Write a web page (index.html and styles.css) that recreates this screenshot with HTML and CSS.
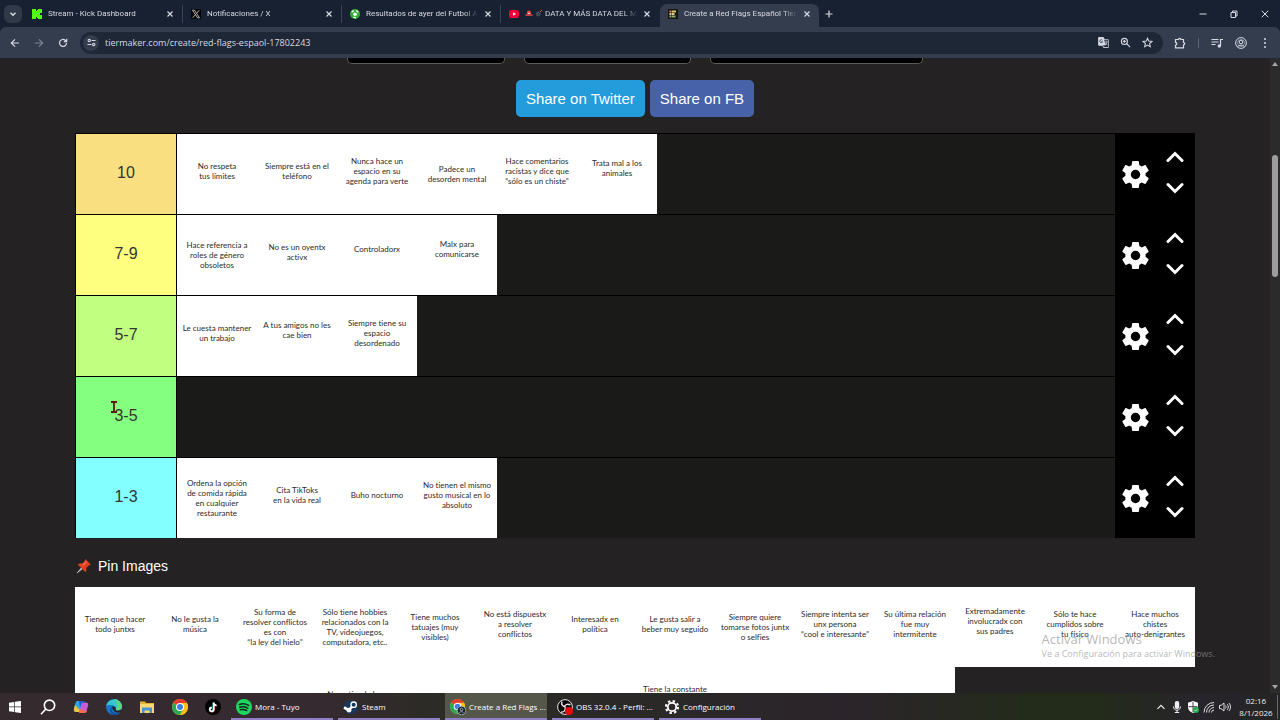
FILE: index.html
```html
<!DOCTYPE html>
<html lang="es">
<head>
    <meta charset="UTF-8">
    <meta name="viewport" content="width=device-width, initial-scale=1.0">
    <title>Create a Red Flags Español Tier List</title>
    <link rel="stylesheet" href="styles.css">
</head>
<body>

    <!-- Shared icons -->
    <svg class="sprite" aria-hidden="true">
        <symbol id="gear" viewBox="2 2 20 20"><path fill="currentColor" d="M19.43 12.98c.04-.32.07-.64.07-.98s-.03-.66-.07-.98l2.11-1.65c.19-.15.24-.42.12-.64l-2-3.46c-.12-.22-.39-.3-.61-.22l-2.49 1c-.52-.4-1.08-.73-1.69-.98l-.38-2.65A.49.49 0 0 0 14 2h-4c-.25 0-.46.18-.49.42l-.38 2.65c-.61.25-1.17.59-1.69.98l-2.49-1c-.23-.09-.49 0-.61.22l-2 3.46c-.13.22-.07.49.12.64l2.11 1.65c-.04.32-.07.65-.07.98s.03.66.07.98l-2.11 1.65c-.19.15-.24.42-.12.64l2 3.46c.12.22.39.3.61.22l2.49-1c.52.4 1.08.73 1.69.98l.38 2.65c.03.24.24.42.49.42h4c.25 0 .46-.18.49-.42l.38-2.65c.61-.25 1.17-.59 1.69-.98l2.49 1c.23.09.49 0 .61-.22l2-3.46c.12-.22.07-.49-.12-.64l-2.11-1.65zM12 15.5a3.5 3.5 0 1 1 0-7 3.5 3.5 0 0 1 0 7z"/></symbol>
        <symbol id="up" viewBox="0 0 18 12"><path d="M2 9.500l7-7 7 7" fill="none" stroke="currentColor" stroke-width="3" stroke-linecap="round"/></symbol>
        <symbol id="down" viewBox="0 0 18 12"><path d="M2 2.500l7 7 7-7" fill="none" stroke="currentColor" stroke-width="3" stroke-linecap="round"/></symbol>
        <symbol id="close" viewBox="0 0 8 8"><path d="M1.500 1.500l5 5M6.500 1.500l-5 5" stroke="currentColor" stroke-width="1.200"/></symbol>
        <symbol id="chrome" viewBox="0 0 16 16"><circle cx="8" cy="8" r="8" fill="#fbc116"/><path d="M8 8L1.070 4A8 8 0 0 1 14.930 4z" fill="#e33b2e"/><path d="M8 8L1.070 4A8 8 0 0 0 8 16l3.500-6z" fill="#2da94f"/><path d="M8 4h6.930A8 8 0 0 1 8 16l3.500-6z" fill="#fbc116"/><circle cx="8" cy="8" r="4" fill="#fff"/><circle cx="8" cy="8" r="3" fill="#3f7ee8"/></symbol>
    </svg>

    <header class="browser">
        <div class="tab-strip">
            <button class="tab-search" aria-label="Buscar pestañas"><svg viewBox="0 0 8 8"><path d="M2 3l2 2 2-2" fill="none" stroke="currentColor" stroke-width="1.200"/></svg></button>
            <div class="tab">
                <svg class="favicon" viewBox="0 0 10 10"><path fill="#53fc18" d="M0 0h4v2h1V1h1V0h4v4H8v2h2v4H6V9H5V8H4v2H0z"/></svg>
                <span class="tab-title">Stream - Kick Dashboard</span>
                <button class="tab-close" aria-label="Cerrar"><svg><use href="#close"/></svg></button>
            </div>
            <div class="tab">
                <svg class="favicon" viewBox="0 0 10 10"><rect width="10" height="10" fill="#050505"/><path d="M1.500 1.200h2l5 7.600h-2zM8.300 1.200L5.600 4.400M4.500 5.500L1.700 8.800" fill="none" stroke="#ddd" stroke-width=".8"/></svg>
                <span class="tab-title">Notificaciones / X</span>
                <button class="tab-close" aria-label="Cerrar"><svg><use href="#close"/></svg></button>
            </div>
            <div class="tab">
                <svg class="favicon" viewBox="0 0 10 10"><circle cx="5" cy="5" r="5" fill="#2fae35"/><path d="M4 3.500l2.500.5.500 2-2 1.200L3 5.800zM1 3l2-2 1 .8-1 1.700zM6.500.8l2 1.500-.3 1.400-2-1zM2.800 8.800l1-1 2 .1.200 1.500z" fill="#fff"/></svg>
                <span class="tab-title">Resultados de ayer del Futbol A</span>
                <button class="tab-close" aria-label="Cerrar"><svg><use href="#close"/></svg></button>
            </div>
            <div class="tab tab-last">
                <svg class="favicon" viewBox="0 0 10 10"><rect y="1" width="10" height="8" rx="2" fill="#f00036"/><path d="M4 3.300v3.400L7 5z" fill="#fff"/></svg>
                <span class="tab-title">
                    <svg class="title-icon" viewBox="0 0 8 8"><path d="M2 5V3.500a2 2 0 0 1 4 0V5z" fill="#f0473f"/><path d="M.5 5.300h7v1.500h-7z" fill="#f0473f"/><path d="M3 4h2v1H3z" fill="#d9dde4"/></svg>
                    <svg class="title-icon" viewBox="0 0 8 8"><circle cx="3.200" cy="5" r="2.500" fill="#3f4752"/><path d="M5 3l2-2" stroke="#d5603c"/></svg>
                    DATA Y MÁS DATA DEL M</span>
                <button class="tab-close" aria-label="Cerrar"><svg><use href="#close"/></svg></button>
            </div>
            <div class="tab tab-active">
                <svg class="favicon" viewBox="0 0 10 10"><rect width="10" height="10" fill="#17150f"/><path d="M1.500 1.500h2v2h-2z" fill="#e58b6b"/><path d="M4 1.500h4v2H4z" fill="#d9c46a"/><path d="M1.500 4h2v2h-2zM4 4h2.500v2H4z" fill="#e2cf8d"/><path d="M1.500 6.500h2v2h-2zM4 6.500h3.500v2H4z" fill="#8fae6d"/></svg>
                <span class="tab-title">Create a Red Flags Español Tier</span>
                <button class="tab-close" aria-label="Cerrar"><svg><use href="#close"/></svg></button>
            </div>
            <button class="tab-new" aria-label="Nueva pestaña"><svg viewBox="0 0 8 8"><path d="M4 .5v7M.5 4h7" stroke="currentColor" stroke-width="1.200"/></svg></button>
            <div class="window-buttons">
                <button aria-label="Minimizar"><svg viewBox="0 0 8 8"><path d="M.5 4h7" stroke="currentColor"/></svg></button>
                <button aria-label="Restaurar"><svg viewBox="0 0 8 8"><path d="M1 2.500h4.500v5H1zM2.500 2.500V1H7v5H5.500" fill="none" stroke="currentColor"/></svg></button>
                <button aria-label="Cerrar ventana"><svg viewBox="0 0 8 8"><path d="M.8.8l6.400 6.400M7.200.8L.8 7.200" stroke="currentColor"/></svg></button>
            </div>
        </div>

        <div class="toolbar">
            <button class="tool" aria-label="Atrás"><svg viewBox="0 0 12 12"><path d="M10 6H2.500M6 2.300L2.300 6 6 9.700" fill="none" stroke="currentColor" stroke-width="1.200"/></svg></button>
            <button class="tool tool-off" aria-label="Adelante"><svg viewBox="0 0 12 12"><path d="M2 6h7.500M6 2.300L9.700 6 6 9.700" fill="none" stroke="currentColor" stroke-width="1.200"/></svg></button>
            <button class="tool" aria-label="Recargar"><svg viewBox="0 0 12 12"><path d="M9.500 6A3.500 3.500 0 1 1 8.300 3.300L9.500 4.500M9.700 1.800v2.900H6.800" fill="none" stroke="currentColor" stroke-width="1.200"/></svg></button>
            <div class="address">
                <button class="site-info" aria-label="Información del sitio"><svg viewBox="0 0 10 10"><g fill="none" stroke="currentColor" stroke-width="1.200"><circle cx="2.500" cy="2.800" r="1.300"/><path d="M5 2.800h4.500M.5 7.200H5"/><circle cx="7.500" cy="7.200" r="1.300"/></g></svg></button>
                <input type="text" class="url" aria-label="Dirección" value="tiermaker.com/create/red-flags-espaol-17802243">
                <button aria-label="Traducir"><svg viewBox="0 0 12 12"><path d="M1 .5h5l1 2.500h4a.7.7 0 0 1 .7.700v7a.7.7 0 0 1-.7.700H6L5.200 9H1a.7.7 0 0 1-.7-.7v-7A.7.700 0 0 1 1 .5z" fill="none" stroke="currentColor"/><path d="M.5.500H6L8.500 9h-8z" fill="currentColor"/><path d="M4.800 3.600a1.600 1.600 0 1 0 .2 1.600H3.600" fill="none" stroke="#1d2736" stroke-width=".8"/><path d="M7.500 5.500h3.300M9 4.700v.8M10 5.700L8 9M8.200 6.500l2 2.300" stroke="currentColor" stroke-width=".8"/></svg></button>
                <button aria-label="Zoom"><svg viewBox="0 0 12 12"><g fill="none" stroke="currentColor" stroke-width="1.200"><circle cx="4.800" cy="4.800" r="3.300"/><path d="M7.200 7.200L11 11M3.200 4.800h3.200M4.800 3.200v3.200"/></g></svg></button>
                <button aria-label="Favoritos"><svg viewBox="0 0 12 12"><path d="M6 1.300l1.400 3.200 3.500.3-2.600 2.300.8 3.400L6 8.700l-3.100 1.800.8-3.400L1.100 4.800l3.500-.3z" fill="none" stroke="currentColor" stroke-width="1.100"/></svg></button>
            </div>
            <button class="tool" aria-label="Extensiones"><svg viewBox="0 0 12 12"><path d="M1.500 2.500h3a1.200 1.200 0 0 1 2.400 0h2.600v3a1.100 1.100 0 0 1 0 2.300v3h-8V8a1.300 1.300 0 0 0 0-2.600z" fill="none" stroke="currentColor" stroke-width="1.200"/></svg></button>
            <span class="divider"></span>
            <button class="tool" aria-label="Multimedia"><svg viewBox="0 0 12 12"><path d="M.5 2.500h7M.5 5h7M.5 7.500h4M9.500 9V2.500H12" fill="none" stroke="currentColor" stroke-width="1.200"/><circle cx="8.300" cy="9" r="1.700" fill="currentColor"/></svg></button>
            <button class="tool" aria-label="Perfil"><svg viewBox="0 0 12 12"><g fill="none" stroke="currentColor"><circle cx="6" cy="6" r="5.400"/><circle cx="6" cy="5" r="1.800"/><path d="M2.500 9.800c1.700-2.200 5.300-2.200 7 0"/><circle cx="6" cy="6" r="3.500" opacity=".5"/></g></svg></button>
            <button class="tool" aria-label="Menú"><svg viewBox="0 0 12 12"><g fill="currentColor"><circle cx="6" cy="2" r="1"/><circle cx="6" cy="6" r="1"/><circle cx="6" cy="10" r="1"/></g></svg></button>
        </div>
    </header>

    <div class="viewport">
        <main class="page">
            <div class="top-cards">
                <div class="card card-small"></div>
                <div class="card card-medium"></div>
                <div class="card card-large"></div>
            </div>

            <div class="share">
                <a href="#" class="share-link twitter">Share on Twitter</a>
                <a href="#" class="share-link facebook">Share on FB</a>
            </div>

            <section class="board">
                <div class="tier">
                    <div class="tier-label tier-gold">10</div>
                    <div class="tier-items">
                        <div class="tile">No respeta<br>tus límites</div>
                        <div class="tile">Siempre está en el<br>teléfono</div>
                        <div class="tile">Nunca hace un<br>espacio en su<br>agenda para verte</div>
                        <div class="tile tile-low">Padece un<br>desorden mental</div>
                        <div class="tile">Hace comentarios<br>racistas y dice que<br>“sólo es un chiste”</div>
                        <div class="tile tile-high">Trata mal a los<br>animales</div>
                    </div>
                    <div class="tier-controls">
                        <button class="settings" aria-label="Opciones"><svg><use href="#gear"/></svg></button>
                        <div class="movers">
                            <button aria-label="Subir"><svg><use href="#up"/></svg></button>
                            <button aria-label="Bajar"><svg><use href="#down"/></svg></button>
                        </div>
                    </div>
                </div>
                <div class="tier">
                    <div class="tier-label tier-yellow">7-9</div>
                    <div class="tier-items">
                        <div class="tile tile-low">Hace referencia a<br>roles de género<br>obsoletos</div>
                        <div class="tile">No es un oyentx<br>activx</div>
                        <div class="tile tile-high">Controladorx</div>
                        <div class="tile tile-high">Malx para<br>comunicarse</div>
                    </div>
                    <div class="tier-controls">
                        <button class="settings" aria-label="Opciones"><svg><use href="#gear"/></svg></button>
                        <div class="movers">
                            <button aria-label="Subir"><svg><use href="#up"/></svg></button>
                            <button aria-label="Bajar"><svg><use href="#down"/></svg></button>
                        </div>
                    </div>
                </div>
                <div class="tier">
                    <div class="tier-label tier-lime">5-7</div>
                    <div class="tier-items">
                        <div class="tile">Le cuesta mantener<br>un trabajo</div>
                        <div class="tile tile-high">A tus amigos no les<br>cae bien</div>
                        <div class="tile">Siempre tiene su<br>espacio<br>desordenado</div>
                    </div>
                    <div class="tier-controls">
                        <button class="settings" aria-label="Opciones"><svg><use href="#gear"/></svg></button>
                        <div class="movers">
                            <button aria-label="Subir"><svg><use href="#up"/></svg></button>
                            <button aria-label="Bajar"><svg><use href="#down"/></svg></button>
                        </div>
                    </div>
                </div>
                <div class="tier">
                    <div class="tier-label tier-green">3-5</div>
                    <div class="tier-items"></div>
                    <div class="tier-controls">
                        <button class="settings" aria-label="Opciones"><svg><use href="#gear"/></svg></button>
                        <div class="movers">
                            <button aria-label="Subir"><svg><use href="#up"/></svg></button>
                            <button aria-label="Bajar"><svg><use href="#down"/></svg></button>
                        </div>
                    </div>
                </div>
                <div class="tier">
                    <div class="tier-label tier-cyan">1-3</div>
                    <div class="tier-items">
                        <div class="tile tile-low">Ordena la opción<br>de comida rápida<br>en cualquier<br>restaurante</div>
                        <div class="tile">Cita TikToks<br>en la vida real</div>
                        <div class="tile">Buho nocturno</div>
                        <div class="tile">No tienen el mismo<br>gusto musical en lo<br>absoluto</div>
                    </div>
                    <div class="tier-controls">
                        <button class="settings" aria-label="Opciones"><svg><use href="#gear"/></svg></button>
                        <div class="movers">
                            <button aria-label="Subir"><svg><use href="#up"/></svg></button>
                            <button aria-label="Bajar"><svg><use href="#down"/></svg></button>
                        </div>
                    </div>
                </div>
            </section>

            <h2 class="pin-title">
                <svg viewBox="0 0 16 16"><path d="M1 15l5.500-6.500 1.200 1.200z" fill="#c9ced3" stroke="#c9ced3" stroke-width=".6"/><path d="M9.500 1.200l5.300 5.300-1.200 1.100-.9-.2-2.500 2.600.3 2.800-1.300 1.300-7.300-7.300 1.300-1.300 2.800.3 2.600-2.500-.2-.9z" fill="#e0401f"/><path d="M4 5.500l3.200.6 3-3 1 1-3.500 3.600z" fill="#f4694b"/></svg>
                Pin Images
            </h2>

            <section class="pins">
                <div class="tile">Tienen que hacer<br>todo juntxs</div>
                <div class="tile">No le gusta la<br>música</div>
                <div class="tile tile-low">Su forma de<br>resolver conflictos<br>es con<br>“la ley del hielo”</div>
                <div class="tile tile-low">Sólo tiene hobbies<br>relacionados con la<br>TV, videojuegos,<br>computadora, etc..</div>
                <div class="tile tile-low">Tiene muchos<br>tatuajes (muy<br>visibles)</div>
                <div class="tile">No está dispuestx<br>a resolver<br>conflictos</div>
                <div class="tile">Interesadx en<br>política</div>
                <div class="tile">Le gusta salir a<br>beber muy seguido</div>
                <div class="tile tile-low">Siempre quiere<br>tomarse fotos juntx<br>o selfies</div>
                <div class="tile">Siempre intenta ser<br>unx persona<br>“cool e interesante”</div>
                <div class="tile">Su última relación<br>fue muy<br>intermitente</div>
                <div class="tile tile-high">Extremadamente<br>involucradx con<br>sus padres</div>
                <div class="tile">Sólo te hace<br>cumplidos sobre<br>tu físico</div>
                <div class="tile">Hace muchos<br>chistes<br>auto-denigrantes</div>
                <div class="tile"></div>
                <div class="tile"></div>
                <div class="tile"></div>
                <div class="tile tile-three">No entiende los</div>
                <div class="tile"></div>
                <div class="tile"></div>
                <div class="tile"></div>
                <div class="tile tile-four">Tiene la constante</div>
                <div class="tile"></div>
                <div class="tile"></div>
                <div class="tile"></div>
            </section>
        </main>
        <div class="scrollbar">
            <svg viewBox="0 0 6 4"><path d="M0 4l3-4 3 4z" fill="currentColor"/></svg>
            <div class="thumb"></div>
            <svg class="scroll-down" viewBox="0 0 6 4"><path d="M0 0l3 4 3-4z" fill="currentColor"/></svg>
        </div>
    </div>

    <footer class="taskbar">
        <button class="launcher" aria-label="Inicio"><svg class="icon-small" viewBox="0 0 12 12"><path d="M0 1.700l5.300-.8v4.700H0zM6 .8L12 0v5.600H6zM0 6.300h5.300V11L0 10.300zM6 6.300h6V12l-6-.8z" fill="#fff"/></svg></button>
        <button class="launcher" aria-label="Buscar"><svg viewBox="0 0 16 16"><g fill="none" stroke="#fff" stroke-width="1.600"><circle cx="9.500" cy="6.300" r="5.200"/><path d="M5.800 10L1 15.200"/></g></svg></button>
        <button class="launcher" aria-label="Copilot"><svg viewBox="0 0 16 16"><path d="M5 2h5l-2.500 9.500c-.3 1-.9 1.500-2 1.500H3C1 13 .5 11.500 1 9.500L2.500 4C3 2.500 3.700 2 5 2z" fill="#29a7e8"/><path d="M2 6l-1 4c-.4 2 .3 3 2 3h2.500c1 0 1.500-.5 2-1.500z" fill="#e9c53c"/><path d="M11 14H6l2.500-9c.3-1 .9-1.500 2-1.500H13c2 0 2.500 1.500 2 3.500l-1.500 5C13 13.500 12.300 14 11 14z" fill="#c65ad8"/><path d="M7 10l7 2c-.5 1.500-1.500 2-3 2H6z" fill="#f06b55"/><path d="M6 2h4.500c1 0 1.500.5 1.700 1.500H10c-1 0-1.700.7-2 2L7 9z" fill="#2559cf"/></svg></button>
        <button class="launcher" aria-label="Edge"><svg viewBox="0 0 16 16"><circle cx="8" cy="8" r="8" fill="#1675c8"/><path d="M.2 7A8 8 0 0 1 16 7.500c0 2.500-2 4-4.200 4-1.800 0-2.600-.6-2-1.500.5-.8.400-2.700-2-3.500C5 5.500 2 6 .2 7z" fill="#37c6d0"/><path d="M8 0a8 8 0 0 1 8 7.500c0 2.500-2 4-4.200 4-1.800 0-2.600-.6-2-1.500 3-2.500 1-7-1.800-10z" fill="#58d681"/><path d="M6 8c-1.500 2.500.5 6.500 5 6.500 1.500 0 3-.7 3.700-1.500C13 16 9.500 16.500 7 15.700 3.500 14.500 3.500 9.500 6 8z" fill="#134f9c"/><path d="M9.800 10c-.6.900.2 1.500 2 1.500 1.500 0 2.800-.5 3.500-1.500l-.6 3c-4.500 2-8-1-8.700-5 1-1 3.500-.5 3.800 2z" fill="#2b2429"/></svg></button>
        <button class="launcher" aria-label="Explorador"><svg viewBox="0 0 16 16"><path d="M1 2.500h5l1 1.500h8v10H1z" fill="#e8b32f"/><path d="M1 5h14v9H1z" fill="#fbd970"/><path d="M3 8.500h10V14h-2.500v-2.500h-5V14H3z" fill="#4595d4"/></svg></button>
        <button class="launcher" aria-label="Chrome"><svg><use href="#chrome"/></svg></button>
        <button class="launcher" aria-label="TikTok"><svg viewBox="0 0 16 16"><circle cx="8" cy="8" r="8" fill="#000"/><g fill="none" stroke-width="1.600"><path d="M8.400 3.500v6.800a1.900 1.900 0 1 1-1.900-1.900M8.400 3.500c.2 1.800 1.200 2.700 2.800 2.800" stroke="#25f4ee"/><path d="M9 4v6.800A1.900 1.900 0 1 1 7.100 8.900M9 4c.2 1.800 1.200 2.700 2.800 2.800" stroke="#fe2c55"/><path d="M8.700 3.700v6.800a1.900 1.900 0 1 1-1.900-1.900M8.700 3.700c.2 1.800 1.200 2.700 2.800 2.800" stroke="#fff"/></g></svg></button>
        <div class="running">
            <button class="app"><svg viewBox="0 0 16 16"><circle cx="8" cy="8" r="8" fill="#1ed760"/><g fill="none" stroke="#10251a" stroke-width="1.500" stroke-linecap="round"><path d="M3.300 5.500c3-1 6.500-.7 9.300.9M3.800 8.200c2.700-.8 5.400-.5 7.900.9M4.300 10.700c2.300-.6 4.400-.3 6.500.8"/></g></svg><span>Mora - Tuyo</span></button>
            <button class="app"><svg viewBox="0 0 16 16"><circle cx="8" cy="8" r="7" fill="#17395f"/><path d="M1 8.500l5 2.700 4.500-5.200" fill="none" stroke="#fff" stroke-width="2.600"/><circle cx="10.700" cy="5.700" r="2.700" fill="#17395f" stroke="#fff" stroke-width="1.300"/><circle cx="6" cy="11.200" r="2.400" fill="#fff"/></svg><span>Steam</span></button>
            <button class="app app-active"><svg viewBox="0 0 16 16"><use href="#chrome" width="15" height="15"/><circle cx="11.500" cy="11.500" r="4.300" fill="#1c2633" stroke="#c5ccd6" stroke-width=".7"/><circle cx="11.500" cy="10.500" r="1.300" fill="none" stroke="#c5ccd6" stroke-width=".7"/><path d="M9.300 13.800c1-1.500 3.400-1.500 4.400 0" fill="none" stroke="#c5ccd6" stroke-width=".7"/></svg><span>Create a Red Flags ...</span></button>
            <button class="app"><svg viewBox="0 0 16 16"><circle cx="8" cy="8" r="7.400" fill="#090909" stroke="#e4e4e4" stroke-width="1"/><path d="M5 2.500c-1 3 .5 5 3 5.200M13.500 6c-2.500-1.500-5-.8-6 1.500M4 13c3 .5 5-1.500 4-5.500" fill="none" stroke="#e4e4e4" stroke-width="1.400"/><circle cx="12" cy="12" r="4" fill="#e90b0b"/></svg><span>OBS 32.0.4 - Perfil: ...</span></button>
            <button class="app"><svg viewBox="0 0 16 16"><g fill="none" stroke="#fff"><circle cx="8" cy="8" r="4.200" stroke-width="1.800"/><circle cx="8" cy="8" r="6" stroke-width="2.200" stroke-dasharray="2.350 2.350"/></g></svg><span>Configuración</span></button>
        </div>
        <div class="tray">
            <svg viewBox="0 0 12 12"><path d="M2.500 7.800L6 4.300l3.500 3.500" fill="none" stroke="currentColor" stroke-width="1.200"/></svg>
            <svg viewBox="0 0 12 12"><rect x="3.800" y="0" width="4.400" height="8" rx="2" fill="currentColor"/><path d="M2.500 5.500c0 5 7 5 7 0M6 9v3M3.800 11.500h4.400" fill="none" stroke="currentColor"/></svg>
            <svg viewBox="0 0 12 12"><path d="M6 0l5 1.700V6c0 3-2 5-5 6-3-1-5-3-5-6V1.700z" fill="#fff"/><path d="M6 1v10M1.500 5.700h9" stroke="#2c2c2c" stroke-width=".9"/><circle cx="9" cy="9" r="3" fill="#1ea54a"/><path d="M7.500 9l1.100 1.100 1.900-2" fill="none" stroke="#fff" stroke-width=".7"/></svg>
            <svg viewBox="0 0 12 12"><g fill="none" stroke="currentColor" stroke-width=".9"><path d="M1 11.500A10 10 0 0 1 11 1.500M3.500 11.500a7.500 7.500 0 0 1 7.500-7.500M6 11.500a5 5 0 0 1 5-5M8.500 11.500A2.500 2.500 0 0 1 11 9"/></g></svg>
            <svg viewBox="0 0 12 12"><g fill="none" stroke="currentColor" stroke-width=".9"><path d="M.5 4.300h1.700L5 2v8L2.200 7.700H.5zM6.500 4.500c.8 1 .8 2 0 3M8.200 3.200c1.500 1.700 1.500 3.900 0 5.600M9.900 2c2.100 2.300 2.100 5.700 0 8"/></g></svg>
            <div class="clock"><time>02:16</time><span>8/1/2026</span></div>
        </div>
    </footer>

    <!-- Overlays -->
    <div class="activate">
        <p class="activate-title">Activar Windows</p>
        <p class="activate-text">Ve a Configuración para activar Windows.</p>
    </div>
    <svg class="cursor" viewBox="0 0 8 12"><path d="M1 1h6M1 11h6M4 1v10" stroke="#54200f" stroke-width="1.800"/></svg>

</body>
</html>
```
FILE: styles.css
```css
* {
    box-sizing: border-box;
}

body {
    display: flex;
    flex-direction: column;
    height: 100vh;
    margin: 0;
    overflow: hidden;
    background: #242223;
    color: #fff;
    font-family: "Liberation Sans", Arial, sans-serif;
}

button {
    display: flex;
    align-items: center;
    justify-content: center;
    padding: 0;
    border: none;
    background: none;
    color: inherit;
    font: inherit;
    cursor: pointer;
}

svg {
    display: block;
    flex: none;
}

.sprite {
    position: absolute;
    width: 0;
    height: 0;
}

/* Browser window */
.browser {
    flex: none;
    background: #182131;
    color: #d5dae3;
    font-family: Roboto, "Noto Sans", sans-serif;
}

.tab-strip {
    display: flex;
    align-items: center;
    height: 27px;
    padding-left: 4px;
    font-size: 8px;
}

.tab-search {
    width: 18px;
    height: 18px;
    border-radius: 6px;
    background: #303947;
}

.tab-search svg {
    width: 10px;
    height: 10px;
}

.tab {
    display: flex;
    flex: 0 1 159px;
    align-items: center;
    gap: 6px;
    min-width: 0;
    height: 18px;
    padding: 0 8px;
    border-right: 1px solid #3b4452;
}

.tab-search + .tab {
    margin-left: 2px;
}

.tab-last {
    border-color: transparent;
}

.tab-active {
    height: 23px;
    align-self: flex-end;
    padding-bottom: 4px;
    border: none;
    border-radius: 7px 7px 0 0;
    background: #343d4e;
}

.favicon {
    width: 10px;
    height: 10px;
}

.tab-title {
    flex: 1;
    overflow: hidden;
    line-height: 12px;
    white-space: nowrap;
    mask-image: linear-gradient(to right, #000 88%, transparent);
}

.title-icon {
    display: inline-block;
    width: 8px;
    height: 8px;
    vertical-align: middle;
}

.tab-close svg {
    width: 8px;
    height: 8px;
}

.tab-new {
    width: 20px;
    height: 20px;
}

.tab-new svg,
.window-buttons svg {
    width: 8px;
    height: 8px;
}

.window-buttons {
    display: flex;
    margin-left: auto;
}

.window-buttons button {
    width: 31px;
    height: 27px;
}

.toolbar {
    display: flex;
    align-items: center;
    height: 31px;
    padding: 0 3px;
    border-radius: 6px 6px 0 0;
    background: #343d4e;
}

.tool {
    width: 24px;
    height: 24px;
}

.tool svg {
    width: 12px;
    height: 12px;
}

.tool-off {
    color: #7b8492;
}

.address {
    display: flex;
    flex: 1;
    align-items: center;
    height: 22px;
    margin: 0 5px;
    padding: 0 5px 0 3px;
    border-radius: 11px;
    background: #1d2736;
}

.address button {
    width: 22px;
    height: 22px;
}

.address svg {
    width: 11px;
    height: 11px;
}

.address .site-info {
    width: 16px;
    height: 16px;
    border-radius: 8px;
    background: #343d4e;
}

.site-info svg {
    width: 9px;
    height: 9px;
}

.url {
    flex: 1;
    min-width: 0;
    padding: 0 6px;
    border: none;
    outline: none;
    background: none;
    color: #d5dae3;
    font: 9px "Open Sans", "Noto Sans", sans-serif;
}

.divider {
    width: 1px;
    height: 10px;
    margin: 0 6px;
    background: #596271;
}

/* Web page */
.viewport {
    display: flex;
    flex: 1;
    min-height: 0;
    overflow: hidden;
}

.page {
    flex: 1;
    max-width: 1120px;
    margin: 0 auto;
}

.top-cards {
    display: flex;
    justify-content: center;
    gap: 19px;
}

.card {
    height: 6px;
    border: 1px solid #5c5c58;
    border-top: none;
    border-radius: 0 0 5px 5px;
    background: #000;
}

.card-small {
    width: 158px;
}

.card-medium {
    width: 167px;
}

.card-large {
    width: 213px;
}

.share {
    display: flex;
    justify-content: center;
    gap: 5px;
    margin: 16px 0;
}

.share-link {
    padding: 0 10px;
    border-radius: 5px;
    color: #fff;
    font-size: 15px;
    line-height: 37px;
    text-decoration: none;
}

.twitter {
    background: #249bda;
}

.facebook {
    background: #4862a9;
}

.board {
    border-left: 1px solid #000;
    background: #000;
}

.tier {
    display: flex;
    min-height: 81px;
    border-top: 1px solid #000;
}

.tier-label {
    display: flex;
    flex: none;
    align-items: center;
    justify-content: center;
    width: 100px;
    padding-bottom: 3px;
    color: #333;
    font-size: 16px;
}

.tier-gold {
    background: #fadf81;
}

.tier-yellow {
    background: #feff7f;
}

.tier-lime {
    background: #c0ff7f;
}

.tier-green {
    background: #84ff80;
}

.tier-cyan {
    background: #84ffff;
}

.tier-items {
    display: flex;
    flex: 1;
    flex-wrap: wrap;
    border-left: 1px solid #000;
    background: #1a1a18;
}

.tile {
    display: flex;
    align-items: center;
    justify-content: center;
    width: 80px;
    height: 80px;
    padding-bottom: 7px;
    background: #fff;
    color: #2b2b2b;
    font-family: Lato, "Open Sans", sans-serif;
    font-size: 8px;
    font-variant-ligatures: none;
    line-height: 10px;
    text-align: center;
    white-space: nowrap;
}

.tile-low {
    padding-bottom: 1px;
}

.tile-high {
    padding-bottom: 12px;
}

/* Captions whose remaining lines are below the fold */
.tile-three,
.tile-four {
    align-items: flex-start;
    padding-top: 22px;
}

.tile-four {
    padding-top: 17px;
}

.tier-controls {
    display: flex;
    width: 80px;
    background: #000;
}

.settings,
.movers {
    width: 40px;
}

.settings svg {
    width: 27px;
    height: 27px;
}

.movers {
    display: flex;
    flex-direction: column;
    justify-content: center;
    gap: 19px;
    padding-bottom: 3px;
}

.movers svg {
    width: 18px;
    height: 12px;
}

.pin-title {
    display: flex;
    gap: 6px;
    height: 49px;
    margin: 0;
    padding: 18px 1px 0;
    font-size: 14px;
    font-weight: normal;
    line-height: 20px;
}

.pin-title svg {
    width: 16px;
    height: 20px;
}

.pins {
    display: flex;
    flex-wrap: wrap;
}

.scrollbar {
    display: flex;
    flex: none;
    flex-direction: column;
    align-items: center;
    width: 10px;
    padding: 4px 0;
    background: #2b2b2b;
    color: #a5a5a5;
}

.scrollbar svg {
    width: 6px;
    height: 4px;
}

.thumb {
    width: 6px;
    height: 122px;
    margin-top: 89px;
    border-radius: 3px;
    background: #9d9d9d;
}

.scroll-down {
    margin-top: auto;
}

/* Taskbar */
.taskbar {
    display: flex;
    flex: none;
    height: 27px;
    background: linear-gradient(to right, #352b2e 0%, #352a30 25%, #2c2b25 34%, #2b2928 50%, #2b242a 66%, #232b1b 80%, #232b1b 86%, #28242b 94%, #242424 100%);
    font-family: "Open Sans", "Noto Sans", sans-serif;
    font-size: 8px;
}

.launcher {
    width: 33px;
    padding-right: 3px;
}

.launcher svg,
.app svg {
    width: 16px;
    height: 16px;
}

.launcher .icon-small {
    width: 12px;
    height: 12px;
}

.running {
    display: flex;
    gap: 5px;
}

.app {
    justify-content: flex-start;
    gap: 3px;
    width: 102px;
    padding: 2px 0 0 5px;
    border-bottom: 2px solid #8f80c6;
    white-space: nowrap;
}

.app-active {
    background: #55574a;
}

.tray {
    display: flex;
    align-items: center;
    gap: 4px;
    margin-left: auto;
    padding-right: 2px;
    color: #eee;
}

.tray svg {
    width: 12px;
    height: 12px;
}

.clock {
    display: flex;
    flex-direction: column;
    width: 43px;
    border-right: 1px solid #6a6a6a;
    line-height: 12px;
    text-align: center;
}

/* Things drawn over the page */
.activate {
    position: absolute;
    right: 65px;
    bottom: 60px;
    color: rgba(150, 150, 150, 0.7);
    font-family: "Open Sans", "Noto Sans", sans-serif;
}

.activate p {
    margin: 0;
}

.activate-title {
    font-size: 13px;
    line-height: 18px;
}

.activate-text {
    font-size: 9px;
    line-height: 12px;
}

.cursor {
    position: absolute;
    left: 110px;
    top: 401px;
    width: 8px;
    height: 12px;
}
```
